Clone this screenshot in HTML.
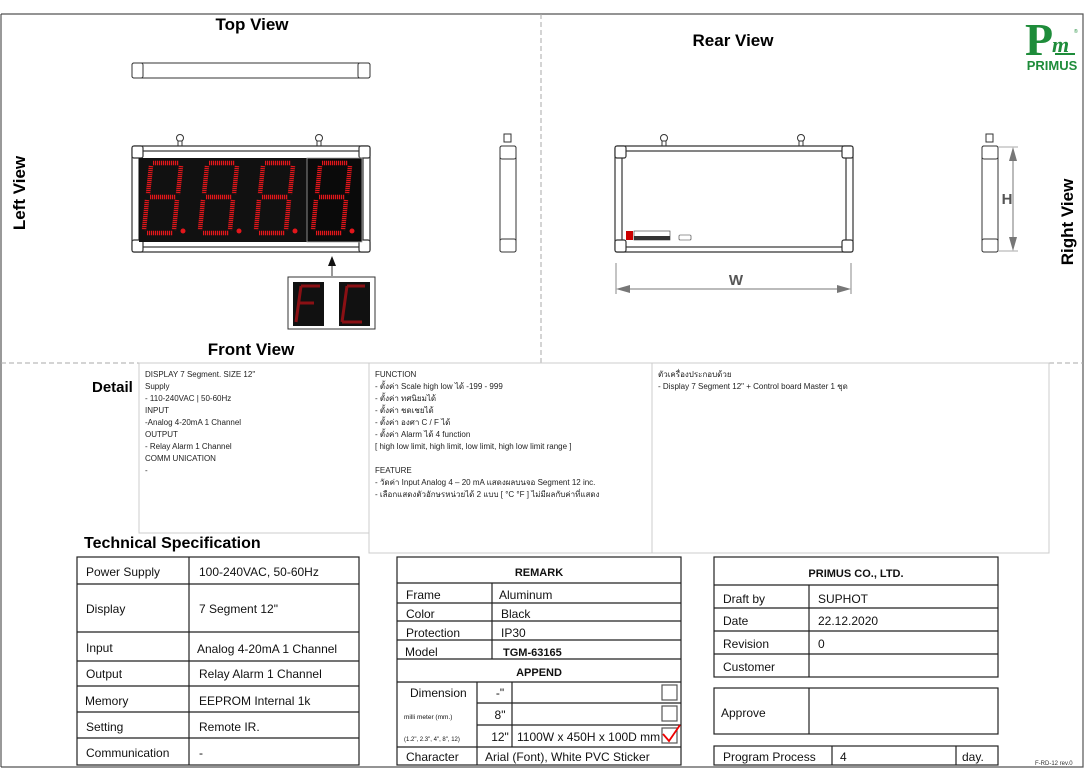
<!DOCTYPE html>
<html><head><meta charset="utf-8"><style>
body{margin:0;background:#fff;width:1087px;height:780px;overflow:hidden}
svg{display:block}
text{font-family:"Liberation Sans","Noto Sans CJK SC",sans-serif}
.t{font-size:12px;fill:#111}
.s{font-size:8px;fill:#222}
.b{font-weight:bold}
</style></head><body>
<svg width="1087" height="780" viewBox="0 0 1087 780" xmlns="http://www.w3.org/2000/svg">
<defs>
<g id="dg" stroke="#e3161b" stroke-width="4.5" stroke-dasharray="1.2 0.8" fill="none">
<path d="M12 5H38M40 8L37 36M10 8L7 36M9 39H35M6 42L3 72M36 42L33 72M6 75H32"/>
<circle cx="42" cy="73" r="2.5" fill="#e3161b" stroke="none"/>
</g>
<g id="frame" fill="#fff" stroke="#333" stroke-width="1.2">
<rect x="0" y="0" width="238" height="106" rx="2"/>
<rect x="7" y="5" width="224" height="96" fill="#fff"/>
<rect x="0" y="0" width="11" height="12" rx="2"/><rect x="227" y="0" width="11" height="12" rx="2"/>
<rect x="0" y="94" width="11" height="12" rx="2"/><rect x="227" y="94" width="11" height="12" rx="2"/>
</g>
</defs>
<path d="M1 14H1083V767H1" fill="none" stroke="#555" stroke-width="1.2"/>
<line x1="1" y1="14" x2="1" y2="767" stroke="#333"/>
<line x1="1" y1="363" x2="1083" y2="363" stroke="#aaa" stroke-dasharray="5 3"/>
<line x1="541" y1="14" x2="541" y2="363" stroke="#aaa" stroke-dasharray="5 3"/>
<text x="252" y="30" text-anchor="middle" class="b" font-size="17">Top View</text>
<text x="733" y="46" text-anchor="middle" class="b" font-size="17">Rear View</text>
<text x="251" y="355" text-anchor="middle" class="b" font-size="17">Front View</text>
<text transform="translate(25,193) rotate(-90)" text-anchor="middle" class="b" font-size="17">Left View</text>
<text transform="translate(1073,222) rotate(-90)" text-anchor="middle" class="b" font-size="17">Right View</text>
<!-- logo -->
<text x="1025" y="55" fill="#1e8c3a" style="font-family:'Liberation Serif',serif;font-weight:bold;font-size:46px">P</text>
<text x="1052" y="52" fill="#1e8c3a" style="font-family:'Liberation Serif',serif;font-style:italic;font-weight:bold;font-size:22px">m</text>
<text x="1074" y="33" fill="#1e8c3a" style="font-size:5px">®</text>
<rect x="1055" y="53" width="20" height="2" fill="#1e8c3a"/>
<text x="1052" y="70" text-anchor="middle" fill="#1e8c3a" class="b" font-size="13">PRIMUS</text>
<rect x="132" y="63" width="238" height="15" rx="2" fill="#fff" stroke="#333"/>
<rect x="132" y="63" width="11" height="15" rx="2" fill="#fff" stroke="#333"/>
<rect x="358" y="63" width="12" height="15" rx="2" fill="#fff" stroke="#333"/>
<g stroke="#333" fill="#fff"><circle cx="180" cy="138" r="3.5"/><rect x="178" y="141" width="4" height="5"/><circle cx="319" cy="138" r="3.5"/><rect x="317" y="141" width="4" height="5"/></g>
<use href="#frame" x="132" y="146"/>
<rect x="139" y="158" width="223" height="84" fill="#111"/>
<rect x="307" y="158" width="55" height="84" fill="#0a0a0a" stroke="#aaa" stroke-width="0.8"/>
<use href="#dg" x="141" y="158"/><use href="#dg" x="197" y="158"/><use href="#dg" x="253" y="158"/><use href="#dg" x="310" y="158"/>
<line x1="332" y1="276" x2="332" y2="265" stroke="#333"/><path d="M328 266L332 256L336 266z" fill="#111"/>
<rect x="288" y="277" width="87" height="52" fill="#fff" stroke="#333"/>
<rect x="293" y="282" width="31" height="44" fill="#111"/><rect x="339" y="282" width="31" height="44" fill="#111"/>
<path d="M301 286H320M301 286L296 322M299 303H314" stroke="#8a1014" stroke-width="3" fill="none"/>
<path d="M347 286H365M347 286L342 322M342 322H362" stroke="#8a1014" stroke-width="3" fill="none"/>
<g fill="#fff" stroke="#333"><rect x="504" y="134" width="7" height="8"/><rect x="500" y="146" width="16" height="106" rx="2"/><rect x="500" y="146" width="16" height="13" rx="2"/><rect x="500" y="239" width="16" height="13" rx="2"/></g>
<g stroke="#333" fill="#fff"><circle cx="664" cy="138" r="3.5"/><rect x="662" y="141" width="4" height="5"/><circle cx="801" cy="138" r="3.5"/><rect x="799" y="141" width="4" height="5"/></g>
<use href="#frame" x="615" y="146"/>
<rect x="626" y="231" width="7" height="9" fill="#c00"/>
<rect x="634" y="231" width="36" height="9" fill="#fff" stroke="#333" stroke-width="0.6"/><rect x="634" y="236" width="36" height="4" fill="#333"/>
<rect x="679" y="235" width="12" height="5" rx="1" fill="#fff" stroke="#333" stroke-width="0.6"/>
<line x1="616" y1="263" x2="616" y2="294" stroke="#888"/><line x1="851" y1="263" x2="851" y2="294" stroke="#888"/>
<line x1="624" y1="289" x2="843" y2="289" stroke="#777"/>
<path d="M616 289L630 285V293z M851 289L837 285V293z" fill="#777"/>
<text x="736" y="285" text-anchor="middle" class="b" font-size="15" fill="#555">W</text>
<g fill="#fff" stroke="#333"><rect x="986" y="134" width="7" height="8"/><rect x="982" y="146" width="16" height="106" rx="2"/><rect x="982" y="146" width="16" height="13" rx="2"/><rect x="982" y="239" width="16" height="13" rx="2"/></g>
<line x1="998" y1="147" x2="1018" y2="147" stroke="#aaa"/><line x1="998" y1="251" x2="1018" y2="251" stroke="#aaa"/>
<line x1="1013" y1="155" x2="1013" y2="243" stroke="#777"/>
<path d="M1013 147L1009 161H1017z M1013 251L1009 237H1017z" fill="#777"/>
<text x="1007" y="204" text-anchor="middle" class="b" font-size="15" fill="#555">H</text>
<text x="92" y="392" class="b" font-size="15">Detail</text>
<g fill="none" stroke="#ccc"><rect x="139" y="363" width="230" height="170"/><rect x="369" y="363" width="283" height="190"/><rect x="652" y="363" width="397" height="190"/></g>
<g class="s">
<text x="145" y="377">DISPLAY 7 Segment. SIZE 12"</text>
<text x="145" y="389">Supply</text>
<text x="145" y="401">- 110-240VAC | 50-60Hz</text>
<text x="145" y="413">INPUT</text>
<text x="145" y="425">-Analog 4-20mA 1 Channel</text>
<text x="145" y="437">OUTPUT</text>
<text x="145" y="449">- Relay Alarm 1 Channel</text>
<text x="145" y="461">COMM UNICATION</text>
<text x="145" y="473">-</text>
<text x="375" y="377">FUNCTION</text>
<text x="375" y="389">- ตั้งค่า Scale high low ได้ -199 - 999</text>
<text x="375" y="401">- ตั้งค่า ทศนิยมได้</text>
<text x="375" y="413">- ตั้งค่า ชดเชยได้</text>
<text x="375" y="425">- ตั้งค่า องศา C / F ได้</text>
<text x="375" y="437">- ตั้งค่า Alarm ได้ 4 function</text>
<text x="375" y="449">[ high low limit, high limit, low limit, high low limit range ]</text>
<text x="375" y="473">FEATURE</text>
<text x="375" y="485">- วัดค่า Input Analog 4 – 20 mA แสดงผลบนจอ Segment 12 inc.</text>
<text x="375" y="497">- เลือกแสดงตัวอักษรหน่วยได้ 2 แบบ [ °C °F ] ไม่มีผลกับค่าที่แสดง</text>
<text x="658" y="377">ตัวเครื่องประกอบด้วย</text>
<text x="658" y="389">- Display 7 Segment 12" + Control board Master 1 ชุด</text>
</g>
<text x="84" y="548" class="b" font-size="16">Technical Specification</text>
<g fill="none" stroke="#222" stroke-width="1.2">
<rect x="77" y="557" width="282" height="208"/>
<path d="M77 584H359M77 632H359M77 661H359M77 686H359M77 712H359M77 738H359M189 557V765"/>
</g>
<g class="t">
<text x="86" y="576">Power Supply</text><text x="199" y="576">100-240VAC, 50-60Hz</text>
<text x="86" y="613">Display</text><text x="199" y="613">7 Segment  12"</text>
<text x="86" y="652">Input</text><text x="197" y="653">Analog 4-20mA 1 Channel</text>
<text x="86" y="678">Output</text><text x="199" y="678">Relay Alarm 1 Channel</text>
<text x="85" y="705">Memory</text><text x="199" y="705">EEPROM Internal 1k</text>
<text x="86" y="731">Setting</text><text x="199" y="731">Remote IR.</text>
<text x="86" y="757">Communication</text><text x="199" y="757">-</text>
</g>
<g fill="none" stroke="#222" stroke-width="1.2">
<rect x="397" y="557" width="284" height="208"/>
<path d="M397 583H681M397 603H681M397 621H681M397 640H681M397 659H681M397 682H681M477 703H681M477 725H681M397 747H681M492 583V659M477 682V765M512 682V747"/>
<rect x="662" y="685" width="15" height="15" stroke="#555"/><rect x="662" y="706" width="15" height="15" stroke="#555"/><rect x="662" y="728" width="15" height="15" stroke="#555"/>
</g>
<path d="M663 734L669 741L680 725" fill="none" stroke="#e00" stroke-width="1.8"/>
<g class="t">
<text x="539" y="576" text-anchor="middle" font-size="11" font-weight="bold">REMARK</text>
<text x="406" y="599">Frame</text><text x="499" y="599">Aluminum</text>
<text x="406" y="618">Color</text><text x="501" y="618">Black</text>
<text x="406" y="637">Protection</text><text x="501" y="637">IP30</text>
<text x="405" y="656">Model</text><text x="503" y="656" class="b" font-size="11">TGM-63165</text>
<text x="539" y="676" text-anchor="middle" font-size="11" font-weight="bold">APPEND</text>
<text x="410" y="697">Dimension</text>
<text x="404" y="719" font-size="6.5">milli meter (mm.)</text>
<text x="404" y="741" font-size="6">(1.2", 2.3", 4", 8", 12)</text>
<text x="500" y="697" text-anchor="middle">-"</text>
<text x="500" y="719" text-anchor="middle">8"</text>
<text x="500" y="741" text-anchor="middle">12"</text>
<text x="517" y="741">1100W x 450H x 100D mm</text>
<text x="406" y="761">Character</text><text x="485" y="761">Arial (Font), White PVC Sticker</text>
</g>
<g fill="none" stroke="#222" stroke-width="1.2">
<rect x="714" y="557" width="284" height="120"/>
<path d="M714 585H998M714 608H998M714 631H998M714 654H998M809 585V677"/>
<rect x="714" y="688" width="284" height="46"/><path d="M809 688V734"/>
<rect x="714" y="746" width="284" height="19"/><path d="M832 746V765M956 746V765"/>
</g>
<g class="t">
<text x="856" y="577" text-anchor="middle" font-size="11" font-weight="bold">PRIMUS CO., LTD.</text>
<text x="723" y="603">Draft by</text><text x="818" y="603">SUPHOT</text>
<text x="723" y="625">Date</text><text x="818" y="625">22.12.2020</text>
<text x="723" y="648">Revision</text><text x="818" y="648">0</text>
<text x="723" y="671">Customer</text>
<text x="721" y="717">Approve</text>
<text x="723" y="761">Program Process</text><text x="840" y="761">4</text><text x="962" y="761">day.</text>
</g>
<text x="1035" y="765" font-size="6" fill="#333">F-RD-12 rev.0</text>
</svg>
</body></html>
